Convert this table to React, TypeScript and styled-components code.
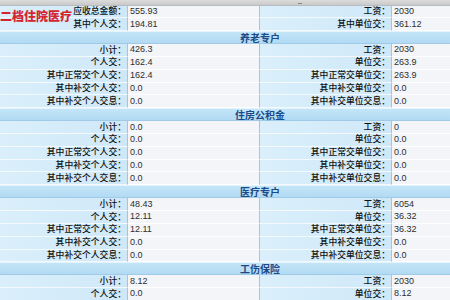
import styled, { createGlobalStyle } from "styled-components";

const GlobalStyle = createGlobalStyle`
  html, body {
    margin: 0;
    padding: 0;
    background: #ffffff;
    overflow: hidden;
  }
`;

interface IRow {
  label1: string;
  value1: string;
  label2: string;
  value2: string;
}

interface ISection {
  title: string;
  rows: IRow[];
}

const topRows: IRow[] = [
  { label1: "应收总金额：", value1: "555.93", label2: "工资：", value2: "2030" },
  { label1: "其中个人交：", value1: "194.81", label2: "其中单位交：", value2: "361.12" },
];

const sections: ISection[] = [
  {
    title: "养老专户",
    rows: [
      { label1: "小计：", value1: "426.3", label2: "工资：", value2: "2030" },
      { label1: "个人交：", value1: "162.4", label2: "单位交：", value2: "263.9" },
      { label1: "其中正常交个人交：", value1: "162.4", label2: "其中正常交单位交：", value2: "263.9" },
      { label1: "其中补交个人交：", value1: "0.0", label2: "其中补交单位交：", value2: "0.0" },
      { label1: "其中补交个人交息：", value1: "0.0", label2: "其中补交单位交息：", value2: "0.0" },
    ],
  },
  {
    title: "住房公积金",
    rows: [
      { label1: "小计：", value1: "0.0", label2: "工资：", value2: "0" },
      { label1: "个人交：", value1: "0.0", label2: "单位交：", value2: "0.0" },
      { label1: "其中正常交个人交：", value1: "0.0", label2: "其中正常交单位交：", value2: "0.0" },
      { label1: "其中补交个人交：", value1: "0.0", label2: "其中补交单位交：", value2: "0.0" },
      { label1: "其中补交个人交息：", value1: "0.0", label2: "其中补交单位交息：", value2: "0.0" },
    ],
  },
  {
    title: "医疗专户",
    rows: [
      { label1: "小计：", value1: "48.43", label2: "工资：", value2: "6054" },
      { label1: "个人交：", value1: "12.11", label2: "单位交：", value2: "36.32" },
      { label1: "其中正常交个人交：", value1: "12.11", label2: "其中正常交单位交：", value2: "36.32" },
      { label1: "其中补交个人交：", value1: "0.0", label2: "其中补交单位交：", value2: "0.0" },
      { label1: "其中补交个人交息：", value1: "0.0", label2: "其中补交单位交息：", value2: "0.0" },
    ],
  },
  {
    title: "工伤保险",
    rows: [
      { label1: "小计：", value1: "8.12", label2: "工资：", value2: "2030" },
      { label1: "个人交：", value1: "0.0", label2: "单位交：", value2: "8.12" },
    ],
  },
];

function DataRow({ label1, value1, label2, value2 }: IRow) {
  return (
    <>
      <Label>{label1}</Label>
      <Value>{value1}</Value>
      <Label>{label2}</Label>
      <Value $last>{value2}</Value>
    </>
  );
}

function Section({ title, rows }: ISection) {
  return (
    <>
      <Header>{title}</Header>
      {rows.map((r, i) => (
        <DataRow key={title + i} {...r} />
      ))}
    </>
  );
}

export default function App() {
  return (
    <Page>
      <GlobalStyle />
      <TopBar>
        <TopMark />
      </TopBar>
      <Table>
        {topRows.map((r, i) => (
          <DataRow key={"top" + i} {...r} />
        ))}
        {sections.map((s) => (
          <Section key={s.title} {...s} />
        ))}
      </Table>
      <Title>二档住院医疗</Title>
    </Page>
  );
}

const Page = styled.div`
  position: relative;
  width: 450px;
  height: 300px;
  overflow: hidden;
  background: #ffffff;
`;

const TopBar = styled.div`
  position: relative;
  height: 5.5px;
  background: linear-gradient(#dcdcdc, #c9c9c9);
  border-bottom: 1px solid #b9bcc0;
  box-sizing: border-box;
`;

const TopMark = styled.span`
  position: absolute;
  left: 298px;
  top: 0;
  width: 4px;
  height: 3px;
  border-bottom: 1px solid #8a8a8a;
`;

const Table = styled.div`
  display: grid;
  grid-template-columns: 128px 132px 132px 1fr;
  grid-auto-rows: 12.85px;
`;

const Label = styled.div`
  display: flex;
  align-items: center;
  justify-content: flex-end;
  padding-right: 1px;
  background: linear-gradient(90deg, #daeffb, #cfe8f8);
  border-bottom: 1px solid #f4f9fd;
  border-right: 1px solid #a9c4d8;
  box-sizing: border-box;
  color: #111111;
  font-family: "Noto Sans CJK SC", sans-serif;
  font-size: 8.8px;
  font-weight: 500;
  white-space: nowrap;
  line-height: 1;
`;

const Value = styled.div<{ $last?: boolean }>`
  display: flex;
  align-items: center;
  padding-left: 2px;
  background: #f3f5f8;
  border-bottom: 1px solid #ffffff;
  border-right: ${(p) => (p.$last ? "none" : "1px solid #a9c4d8")};
  box-sizing: border-box;
  color: #2e2e2e;
  font-family: "Liberation Sans", Arial, sans-serif;
  font-size: 9px;
  white-space: nowrap;
  line-height: 1;
`;

const Header = styled.div`
  grid-column: 1 / -1;
  display: flex;
  align-items: center;
  justify-content: center;
  padding-left: 70px;
  background: linear-gradient(#c3e5f8, #b2daf3);
  border-top: 1px solid #e4f3fc;
  border-bottom: 1px solid #9fcbe8;
  box-sizing: border-box;
  color: #1b4a88;
  font-family: "Noto Sans CJK SC", sans-serif;
  font-weight: 700;
  font-size: 10px;
  line-height: 1;
`;

const Title = styled.div`
  position: absolute;
  left: 0;
  top: 9px;
  color: #d42630;
  font-family: "Noto Sans CJK SC", sans-serif;
  font-weight: 900;
  font-size: 12px;
  line-height: 14px;
`;
